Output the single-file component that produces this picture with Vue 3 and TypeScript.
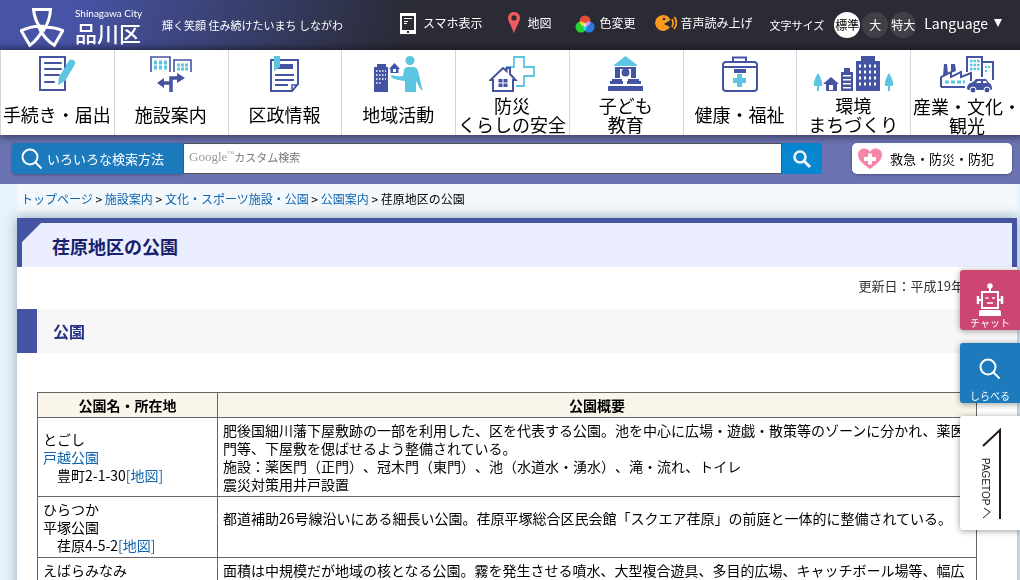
<script setup lang="ts">
interface NavItem {
  icon: string
  lines: string[]
}

interface Crumb {
  label: string
  link: boolean
}

const navItems: NavItem[] = [
  { icon: 'document', lines: ['手続き・届出'] },
  { icon: 'facility', lines: ['施設案内'] },
  { icon: 'news', lines: ['区政情報'] },
  { icon: 'community', lines: ['地域活動'] },
  { icon: 'safety', lines: ['防災', 'くらしの安全'] },
  { icon: 'education', lines: ['子ども', '教育'] },
  { icon: 'health', lines: ['健康・福祉'] },
  { icon: 'town', lines: ['環境', 'まちづくり'] },
  { icon: 'industry', lines: ['産業・文化・', '観光'] },
]

const crumbs: Crumb[] = [
  { label: 'トップページ', link: true },
  { label: '施設案内', link: true },
  { label: '文化・スポーツ施設・公園', link: true },
  { label: '公園案内', link: true },
  { label: '荏原地区の公園', link: false },
]

const sizes: string[] = ['標準', '大', '特大']
</script>

<template>
  <div class="page">
    <header class="top">
      <a class="logo" href="#">
        <svg class="emblem" width="44" height="42" viewBox="0 0 44 42" fill="none" stroke="#fff" stroke-width="3">
          <path d="M13.500 3.500h17q-0.500 11-7 21l-2-1q-7-9-8-20z" />
          <path d="M13.500 3.500h17q-0.500 11-7 21l-2-1q-7-9-8-20z" transform="rotate(120 22 22.500)" />
          <path d="M13.500 3.500h17q-0.500 11-7 21l-2-1q-7-9-8-20z" transform="rotate(240 22 22.500)" />
        </svg>
        <span class="logo-text">
          <span class="logo-en">Shinagawa City</span>
          <span class="logo-ja">品川区</span>
        </span>
      </a>
      <p class="tagline">輝く笑顔 住み続けたいまち しながわ</p>
      <div class="tools">
        <a class="tool" href="#">
          <svg class="tool-icon" width="24" height="24" viewBox="0 0 24 24">
            <path d="M5 2h16v21H5z" fill="#fff" />
            <path d="M7 5h12v14H7z" fill="#2a2b35" />
            <path d="M9 7.500h8M9 10.500h4M9 12.500h3" stroke="#fff" />
            <path d="M12 20h2v2h-2z" fill="#2a2b35" />
          </svg>
          スマホ表示
        </a>
        <a class="tool" href="#">
          <svg class="tool-icon" width="24" height="24" viewBox="0 0 24 24">
            <path fill="#ee5a5e" fill-rule="evenodd" d="M14 1c3.500 0 6 2.500 6 5.800c0 4-4 9-6 15.700c-2-6.700-6-11.700-6-15.700C8 3.500 10.500 1 14 1zm0 3.300a2.600 2.600 0 1 0 0 5.200a2.600 2.600 0 0 0 0-5.200z" />
          </svg>
          地図
        </a>
        <a class="tool" href="#">
          <svg class="tool-icon" width="27" height="24" viewBox="0 0 27 24">
            <g class="rgb">
              <circle cx="16" cy="10" r="5.500" fill="#dd2c00" />
              <circle cx="12" cy="16" r="5.500" fill="#00c800" />
              <circle cx="20" cy="16" r="5.500" fill="#0060e0" />
            </g>
          </svg>
          色変更
        </a>
        <a class="tool" href="#">
          <svg class="tool-icon" width="24" height="24" viewBox="0 0 24 24">
            <path fill="#fb9a1e" d="M15.500 6A8 8 0 1 0 17 16L11 13l6.500-4z" />
            <circle cx="11" cy="8" r="1.300" fill="#2a2b35" />
            <path d="M19 8q2 4 0 8M21.500 6q4 6-0.500 12" fill="none" stroke="#fb9a1e" stroke-width="1.800" />
          </svg>
          音声読み上げ
        </a>
        <div class="sizes">
          <span class="sizes-label">文字サイズ</span>
          <button v-for="(s, i) in sizes" :key="s" type="button" class="size" :class="{ active: i === 0 }">{{ s }}</button>
        </div>
        <button type="button" class="language">
          Language
          <svg width="10" height="8" viewBox="0 0 10 8"><path d="M1 0h8L5 8z" fill="#fff" /></svg>
        </button>
      </div>
    </header>

    <nav class="main-nav">
      <a v-for="item in navItems" :key="item.icon" class="nav-item" href="#">
        <svg v-if="item.icon === 'document'" width="36" height="36" viewBox="0 0 36 36">
          <path d="M1 1h25v33H1z" fill="#fff" stroke="#4553a3" stroke-width="2" />
          <path d="M6 7h16M6 13h16M6 19h14M6 26h9" stroke="#4553a3" stroke-width="2" stroke-linecap="round" />
          <path d="M30 4.500q3-2 5 0q2 2 0.500 4.500L26 25l-7 4l1-8z" fill="#5bc5e2" />
        </svg>
        <svg v-else-if="item.icon === 'facility'" width="42" height="36" viewBox="0 0 42 36">
          <path d="M1 16V1h19v15M24 16V4h17v12" fill="none" stroke="#4553a3" stroke-width="1.600" />
          <path d="M4 6.500h13M4 11.500h13" stroke="#5bc5e2" stroke-width="4" stroke-dasharray="3 2" />
          <path d="M27 9h11M27 13h11" stroke="#5bc5e2" stroke-width="3" stroke-dasharray="3 1" />
          <path d="M21 36V22h7M21 27h-9" fill="none" stroke="#4553a3" stroke-width="3.500" />
          <path d="M7 27l7-5v10zM35 22l-8-5v10z" fill="#4553a3" />
        </svg>
        <svg v-else-if="item.icon === 'news'" width="29" height="36" viewBox="0 0 29 36">
          <path d="M1 4h27v24l-6 7H1z" fill="#fff" stroke="#4553a3" stroke-width="2" />
          <path d="M22 35v-6h6" fill="none" stroke="#4553a3" stroke-width="1.500" />
          <path d="M5 8h18v5H5z" fill="#4553a3" />
          <path d="M5 19h19M5 24h19M5 29h13" stroke="#4553a3" stroke-width="1.800" />
          <path d="M4 0h6v11l-6 4z" fill="#5bc5e2" />
        </svg>
        <svg v-else-if="item.icon === 'community'" width="49" height="36" viewBox="0 0 49 36">
          <path d="M3 8h9v3h2v25H0V11h3z" fill="#4553a3" />
          <path d="M2 15h10M2 19h10M2 23h10M2 27h6" stroke="#fff" stroke-width="1.500" stroke-dasharray="1.500 1.500" />
          <path d="M20.500 7l5.500 6h-1.500v4h-8v-4H15z" fill="#4553a3" />
          <path d="M19 13h3v3h-3z" fill="#fff" />
          <circle cx="36" cy="4.500" r="4.500" fill="#5bc5e2" />
          <path d="M34 11h5q4 0 5 4l4 17q1 3-1 2l-5-9v11H31V25q-6 0-13-3q-2-2 0-3q5 2 11 1l1-6q1-3 4-3z" fill="#5bc5e2" />
        </svg>
        <svg v-else-if="item.icon === 'safety'" width="46" height="36" viewBox="0 0 46 36">
          <path d="M17 11h8V1h10v10h10v9H35v10h-8" fill="none" stroke="#5bc5e2" stroke-width="1.800" />
          <path d="M4 35V24H1.500L14 12l3.500 3v-3H21v6l5.500 6H24v11z" fill="#fff" stroke="#4553a3" stroke-width="2" />
          <path d="M9.500 23h4v3.500h-4zM14.500 23h4v3.500h-4zM9.500 27.500h4V31h-4zM14.500 27.500h4V31h-4z" fill="#4553a3" />
        </svg>
        <svg v-else-if="item.icon === 'education'" width="35" height="36" viewBox="0 0 35 36">
          <path d="M17.500 0L29 9v1H6V9z" fill="#5bc5e2" />
          <path d="M7 11h21v11h-5v-9H12v9H7zM4 23h10v2h1v3H2v-3h2zM20 23h11v2h2v3H19v-3h1zM0 30h35v5H0z" fill="#4553a3" />
          <circle cx="17.500" cy="16.500" r="4" fill="#4553a3" />
        </svg>
        <svg v-else-if="item.icon === 'health'" width="36" height="36" viewBox="0 0 36 36">
          <path d="M11 6V1.500h13V6M4 6h28q3 0 3 3v23q0 3-3 3H4q-3 0-3-3V9q0-3 3-3z" fill="none" stroke="#4553a3" stroke-width="2" />
          <path d="M1 11h34" stroke="#4553a3" stroke-width="1.800" />
          <path d="M12 13h12v4H12z" fill="#4553a3" />
          <path d="M15 18h5v4h4v5h-4v4h-5v-4h-4v-5h4z" fill="#5bc5e2" />
        </svg>
        <svg v-else-if="item.icon === 'town'" width="80" height="36" viewBox="0 0 80 36">
          <path d="M5 17q5 8 4 13H6v5H4v-5H1q-1-5 4-13zM76 17q5 8 4 13h-3v5h-2v-5h-3q-1-5 4-13z" fill="#5bc5e2" />
          <path d="M18 21l8 7h-2v7H13v-7h-3zM31 12h6v4h3v19H28V16h3zM48 0h14v5h5v30H43V5h5z" fill="#4553a3" />
          <path d="M16 29h4v5h-4zM30 19h8v1.500h-8zM30 23h8v1.500h-8zM30 27h8v1.500h-8zM30 31h8v1.500h-8z" fill="#fff" />
          <path d="M46 10h19M46 16h19M46 22h19M46 28h19" stroke="#fff" stroke-width="3" stroke-dasharray="2 3" />
        </svg>
        <svg v-else width="54" height="37" viewBox="0 0 54 37">
          <path d="M27 16V1h15v20M42 6h11v18" fill="none" stroke="#4553a3" stroke-width="2" />
          <path d="M30 5h10M30 9h10M30 13h10" stroke="#5bc5e2" stroke-width="2.500" stroke-dasharray="2.500 1" />
          <path d="M45 11h5M45 15h3" stroke="#5bc5e2" stroke-width="2" stroke-dasharray="2 1" />
          <path d="M1 31V21l10-5v5l10-5v5l10-4v8M1 31h24" fill="none" stroke="#4553a3" stroke-width="2" />
          <path d="M4 8h3l1 10l-5 2zM11 8h4l1 7l-5 2z" fill="#4553a3" />
          <path d="M5 26h20" stroke="#5bc5e2" stroke-width="3" stroke-dasharray="4 2" />
          <path d="M28 29q1-2 5-3l3-3h10l3 4q3 1 3 6q0 1-2 1H28q-2-2 0-5z" fill="#4553a3" />
          <path d="M36 27l2-2h3v2zM43 25h3l1 2h-4z" fill="#fff" />
          <circle cx="33" cy="34" r="3" fill="#4553a3" stroke="#fff" />
          <circle cx="47" cy="34" r="3" fill="#4553a3" stroke="#fff" />
        </svg>
        <span class="nav-label">
          <span v-for="line in item.lines" :key="line">{{ line }}</span>
        </span>
      </a>
    </nav>

    <div class="search-bar">
      <form class="search" @submit.prevent>
        <button type="button" class="methods">
          <svg width="22" height="22" viewBox="0 0 22 22" fill="none" stroke="#fff" stroke-width="2">
            <circle cx="9" cy="9" r="7.500" />
            <path d="M14.500 14.500l6 6" />
          </svg>
          いろいろな検索方法
        </button>
        <label class="query">
          <span class="brand">Google<sup>™</sup></span>
          <input type="text" placeholder="カスタム検索" aria-label="サイト内検索">
        </label>
        <button type="submit" class="go" aria-label="検索">
          <svg width="20" height="20" viewBox="0 0 20 20" fill="none" stroke="#f0f3f6">
            <circle cx="8" cy="8" r="5.500" stroke-width="2.600" />
            <path d="M12 12l6 6" stroke-width="3" />
          </svg>
        </button>
      </form>
      <a class="emergency" href="#">
        <svg width="24" height="22" viewBox="0 0 24 22">
          <path d="M12 21C5 16 0 12 0 6.500C0 3 3 0.500 6 0.500c3 0 5 1.500 6 3.500c1-2 3-3.500 6-3.500c3 0 6 2.500 6 6C24 12 19 16 12 21z" fill="#f686a8" />
          <path d="M10 5.500h4v3.500h4v4h-4v3.500h-4V13H6V9h4z" fill="#fff" />
        </svg>
        救急・防災・防犯
      </a>
    </div>

    <div class="body">
      <nav class="crumbs">
        <template v-for="(c, i) in crumbs" :key="c.label">
          <span v-if="i > 0"> &gt; </span>
          <a v-if="c.link" href="#">{{ c.label }}</a>
          <span v-else>{{ c.label }}</span>
        </template>
      </nav>

      <main class="content">
        <h1>
          <svg class="corner" width="20" height="20" viewBox="0 0 20 20"><path d="M0 0h19L0 19z" fill="#4553a3" /></svg>
          荏原地区の公園
        </h1>
        <p class="updated">更新日：平成19年</p>
        <h2>公園</h2>
        <table>
          <colgroup>
            <col class="col-name">
            <col>
          </colgroup>
          <thead>
            <tr>
              <th scope="col">公園名・所在地</th>
              <th scope="col">公園概要</th>
            </tr>
          </thead>
          <tbody>
            <tr>
              <td>とごし<br><a href="#">戸越公園</a><br>　豊町2-1-30<a href="#">[地図]</a></td>
              <td>肥後国細川藩下屋敷跡の一部を利用した、区を代表する公園。池を中心に広場・遊戯・散策等のゾーンに分かれ、薬医門等、下屋敷を偲ばせるよう整備されている。<br>施設：薬医門（正門）、冠木門（東門）、池（水道水・湧水）、滝・流れ、トイレ<br>震災対策用井戸設置</td>
            </tr>
            <tr>
              <td>ひらつか<br>平塚公園<br>　荏原4-5-2<a href="#">[地図]</a></td>
              <td>都道補助26号線沿いにある細長い公園。荏原平塚総合区民会館「スクエア荏原」の前庭と一体的に整備されている。<br>&nbsp;</td>
            </tr>
            <tr>
              <td>えばらみなみ</td>
              <td>面積は中規模だが地域の核となる公園。霧を発生させる噴水、大型複合遊具、多目的広場、キャッチボール場等、幅広</td>
            </tr>
          </tbody>
        </table>
      </main>
    </div>

    <aside class="side">
      <button type="button" class="side-btn chat">
        <svg width="28" height="34" viewBox="0 0 28 34" fill="none" stroke="#fff">
          <circle cx="14" cy="3" r="2.700" fill="#fff" stroke="none" />
          <path d="M14 4v5M6 9h16v16H6zM3 17h3M22 17h3" stroke-width="2" />
          <path d="M2 13v8M26 13v8" stroke-width="2.500" />
          <path d="M9.500 15h3M16 15h3M11 20h6" stroke-width="1.600" />
          <path d="M5 27h18q2 0 2 2v4H3v-4q0-2 2-2z" fill="#fff" stroke="none" />
        </svg>
        <span>チャット</span>
      </button>
      <button type="button" class="side-btn find">
        <svg width="22" height="22" viewBox="0 0 22 22" fill="none" stroke="#fff" stroke-width="2">
          <circle cx="9" cy="9" r="7.500" />
          <path d="M14.500 14.500l6 6" />
        </svg>
        <span>しらべる</span>
      </button>
      <a class="pagetop" href="#">
        <span>PAGETOP</span>
        <svg width="20" height="94" viewBox="0 0 20 94" fill="none" stroke="#231815">
          <path d="M1 20L18 4v89" stroke-width="2" />
          <path d="M1 92l7-6l-6-4" stroke-width="1" />
        </svg>
      </a>
    </aside>
  </div>
</template>

<style>
body {
  margin: 0;
  background: #e7f3fa;
}
</style>

<style scoped>
.page {
  min-height: 100vh;
  overflow: hidden;
  font-family: "Noto Sans CJK JP", sans-serif;
  font-size: 14px;
  line-height: 18px;
  color: #000;
  text-spacing-trim: space-all;
}
button {
  font: inherit;
  border: 0;
  padding: 0;
  cursor: pointer;
}
a {
  color: #1064ae;
  text-decoration: none;
}
svg {
  flex: none;
  display: block;
}

.top {
  display: flex;
  align-items: center;
  height: 50px;
  box-sizing: border-box;
  padding: 0 17px 0 20px;
  color: #fff;
  background: linear-gradient(to bottom, transparent 42px, rgba(20, 16, 24, 0.3)),
    linear-gradient(105deg, #4754a6 70px, #2a2b35 400px);
}
.logo {
  display: flex;
  gap: 11px;
  color: #fff;
}
.emblem {
  margin-top: 4px;
}
.logo-text {
  display: flex;
  flex-direction: column;
  width: 67px;
  white-space: nowrap;
}
.logo-en {
  margin-top: 5px;
  font: 10px/12px Lato, sans-serif;
}
.logo-ja {
  font-size: 22px;
  line-height: 26px;
  font-weight: 500;
}
.tagline {
  margin: 0 0 0 20px;
  font-size: 11px;
  white-space: nowrap;
}
.tools {
  display: flex;
  align-items: center;
  gap: 17px;
  margin-left: auto;
  font-size: 12px;
  white-space: nowrap;
}
.tool {
  display: flex;
  align-items: center;
  gap: 4px;
  color: #fff;
  padding-bottom: 4px;
}
.rgb circle {
  mix-blend-mode: screen;
}
.sizes {
  display: flex;
  align-items: center;
  gap: 2px;
}
.sizes-label {
  font-size: 11px;
  margin-right: 8px;
}
.size {
  width: 26px;
  height: 26px;
  border-radius: 50%;
  background: #404047;
  color: #fff;
  white-space: nowrap;
}
.size.active {
  background: #fff;
  color: #000;
}
.language {
  display: flex;
  align-items: center;
  gap: 5px;
  margin-left: -9px;
  padding-bottom: 4px;
  background: none;
  color: #fff;
  font-size: 14px;
}

.main-nav {
  position: relative;
  display: grid;
  grid-template-columns: repeat(9, 1fr);
  height: 85px;
  margin-right: -4px;
  background: #fff;
  box-shadow: 0 2px 8px rgba(0, 0, 0, 0.5);
}
.nav-item {
  display: flex;
  flex-direction: column;
  align-items: center;
  gap: 3px;
  padding: 6px 1px 0 0;
  border-left: 1px solid #d5d5dc;
  color: #000;
}
.nav-label {
  display: flex;
  flex-direction: column;
  justify-content: center;
  align-items: center;
  height: 39px;
  font-size: 18px;
  line-height: 19px;
  white-space: nowrap;
}

.search-bar {
  display: flex;
  align-items: center;
  justify-content: space-between;
  height: 49px;
  box-sizing: border-box;
  padding: 0 8px 2px 12px;
  background: #6b73b2;
}
.search {
  display: flex;
  flex: 1;
  height: 31px;
  margin-right: 30px;
}
.methods {
  display: flex;
  align-items: center;
  gap: 4px;
  width: 171px;
  padding-left: 9px;
  border-radius: 4px 0 0 4px;
  background: #1c7abd;
  color: #fff;
  font-size: 13px;
  box-shadow: 0 1px 3px rgba(0, 0, 0, 0.3);
}
.query {
  display: flex;
  flex: 1;
  align-items: center;
  box-sizing: border-box;
  border: 1px solid #555;
  padding: 0 5px 4px;
  background: #fff;
}
.brand {
  font: 13px/18px "Liberation Serif", serif;
  color: #999;
}
.brand sup {
  font-size: 7px;
  line-height: 1;
}
.query input {
  flex: 1;
  min-width: 0;
  border: 0;
  padding: 0;
  outline: 0;
  background: none;
  font: inherit;
  font-size: 11px;
}
.query input::placeholder {
  color: #777;
  opacity: 1;
}
.go {
  display: flex;
  align-items: center;
  justify-content: center;
  width: 40px;
  border-radius: 0 2px 2px 0;
  background: #0787d0;
}
.emergency {
  display: flex;
  align-items: center;
  gap: 8px;
  width: 160px;
  height: 31px;
  box-sizing: border-box;
  padding-left: 6px;
  border-radius: 5px;
  background: #fff;
  color: #000;
  font-size: 13px;
  box-shadow: 0 1px 3px rgba(0, 0, 0, 0.3);
}

.body {
  padding: 0 3px 0 17px;
}
.crumbs {
  height: 28px;
  margin-bottom: 6px;
  padding-left: 4px;
  background: #f3f8fc;
  font-size: 12px;
  line-height: 29px;
}
.content {
  padding-bottom: 40px;
  background: #fff;
  box-shadow: 0 0 12px rgba(20, 50, 80, 0.4);
}
h1 {
  position: relative;
  margin: 0;
  padding: 10px 30px 8px;
  border: solid #4553a3;
  border-width: 5px 5px 0;
  background: #ebeeff;
  color: #17206b;
  font-size: 18px;
  line-height: 26px;
}
.corner {
  position: absolute;
  top: 0;
  left: 0;
}
.updated {
  margin: 0;
  padding: 10px 53px 14px 0;
  color: #333;
  font-size: 13px;
  text-align: right;
}
h2 {
  margin: 0 0 39px;
  padding: 10px 16px;
  border-left: 20px solid #4553a3;
  background: #f7f7f7;
  color: #26318a;
  font-size: 16px;
  line-height: 24px;
}
table {
  width: calc(100% - 60px);
  margin: 0 40px 0 20px;
  border-collapse: collapse;
  table-layout: fixed;
}
.col-name {
  width: 180px;
}
th,
td {
  padding: 3px 5px;
  border: 1px solid #666;
}
th {
  background: #f9f5ea;
}

.side {
  position: fixed;
  top: 270px;
  right: 0;
  display: flex;
  flex-direction: column;
  gap: 13px;
}
.side-btn {
  display: flex;
  flex-direction: column;
  align-items: center;
  justify-content: flex-end;
  width: 60px;
  height: 60px;
  box-sizing: border-box;
  padding-bottom: 1px;
  border-radius: 3px 0 0 3px;
  color: #fff;
  font-size: 10px;
  line-height: 12px;
  box-shadow: 0 1px 6px rgba(0, 0, 0, 0.4);
}
.chat {
  background: #cb4771;
}
.find {
  gap: 10px;
  background: #1c7abd;
}
.pagetop {
  display: flex;
  align-items: center;
  width: 60px;
  height: 114px;
  box-sizing: border-box;
  padding-left: 20px;
  background: #fff;
  color: #231815;
  border-radius: 3px 0 0 3px;
  box-shadow: 0 1px 6px rgba(0, 0, 0, 0.4);
}
.pagetop span {
  width: 11px;
  margin-right: -9px;
  padding-top: 18px;
  writing-mode: vertical-rl;
  font: 10px/11px "Liberation Sans", sans-serif;
}
</style>
